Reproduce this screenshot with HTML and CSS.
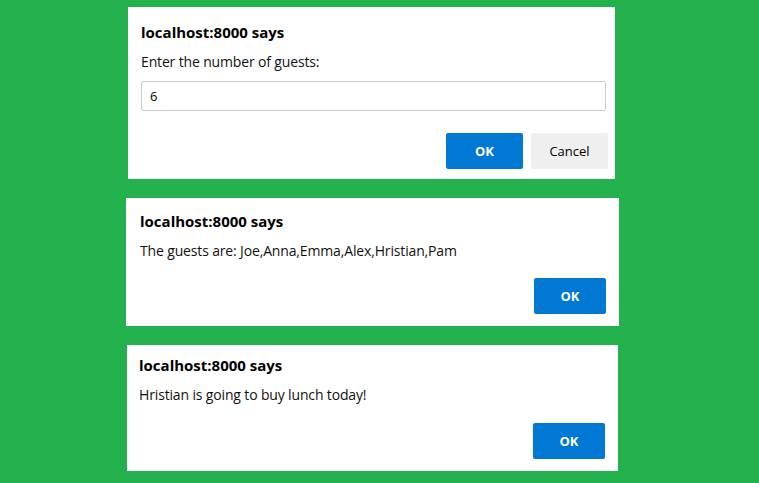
FILE: index.html
```html
<!DOCTYPE html>
<html lang="en">
<head>
<meta charset="utf-8">
<title>Dialogs</title>
<link rel="stylesheet" href="styles.css">
</head>
<body>
<main class="stage">
  <section class="dialog dialog--prompt">
    <h2 class="dialog__title">localhost:8000 says</h2>
    <p class="dialog__msg">Enter the number of guests:</p>
    <input class="dialog__input" type="text" value="6">
    <div class="dialog__actions">
      <button class="btn btn--primary btn--wide">OK</button>
      <button class="btn btn--secondary btn--wide">Cancel</button>
    </div>
  </section>
  <section class="dialog dialog--list">
    <h2 class="dialog__title">localhost:8000 says</h2>
    <p class="dialog__msg">The guests are: Joe,Anna,Emma,Alex,Hristian,Pam</p>
    <div class="dialog__actions">
      <button class="btn btn--primary">OK</button>
    </div>
  </section>
  <section class="dialog dialog--result">
    <h2 class="dialog__title">localhost:8000 says</h2>
    <p class="dialog__msg">Hristian is going to buy lunch today!</p>
    <div class="dialog__actions">
      <button class="btn btn--primary">OK</button>
    </div>
  </section>
</main>
</body>
</html>
```

FILE: styles.css
```css
* { box-sizing: border-box; }
html, body {
  margin: 0;
  height: 483px;
  overflow: hidden;
}
body {
  background: #22b14c;
  font-family: "Open Sans", "Noto Sans", sans-serif;
  color: #000;
}
.stage {
  display: flex;
  flex-direction: column;
  align-items: flex-start;
  gap: 19px;
  padding-top: 7px;
}
.dialog {
  background: #fff;
  display: flex;
  flex-direction: column;
}
.dialog--prompt {
  margin-left: 128px;
  width: 487px;
  height: 172px;
  padding: 15px 7px 10px 13px;
}
.dialog--list {
  margin-left: 126px;
  width: 493px;
  height: 128px;
  padding: 13px 13px 12px 14px;
}
.dialog--result {
  margin-left: 127px;
  width: 491px;
  height: 126px;
  padding: 10px 13px 12px 12px;
}
.dialog__title {
  margin: 0;
  font-size: 15px;
  line-height: 20px;
  font-weight: 700;
}
.dialog__msg {
  margin: 10px 0 0;
  font-size: 14px;
  line-height: 20px;
  letter-spacing: -0.15px;
  color: #111;
}
.dialog__input {
  display: block;
  width: calc(100% - 2px);
  height: 30px;
  margin-top: 9px;
  border: 1px solid #c9c9c9;
  border-radius: 2px;
  padding: 0 8px;
  font-family: inherit;
  font-size: 13px;
  color: #000;
  background: #fff;
}
.dialog__actions {
  margin-top: auto;
  display: flex;
  justify-content: flex-end;
  gap: 8px;
}
.btn {
  width: 72px;
  height: 36px;
  border: 0;
  border-radius: 2px;
  font-family: inherit;
  font-size: 13px;
  padding: 0;
}
.btn--wide { width: 77px; }
.btn--primary {
  background: #0078d4;
  color: #fff;
  font-weight: 700;
}
.btn--secondary {
  background: #efefef;
  color: #000;
}
```
